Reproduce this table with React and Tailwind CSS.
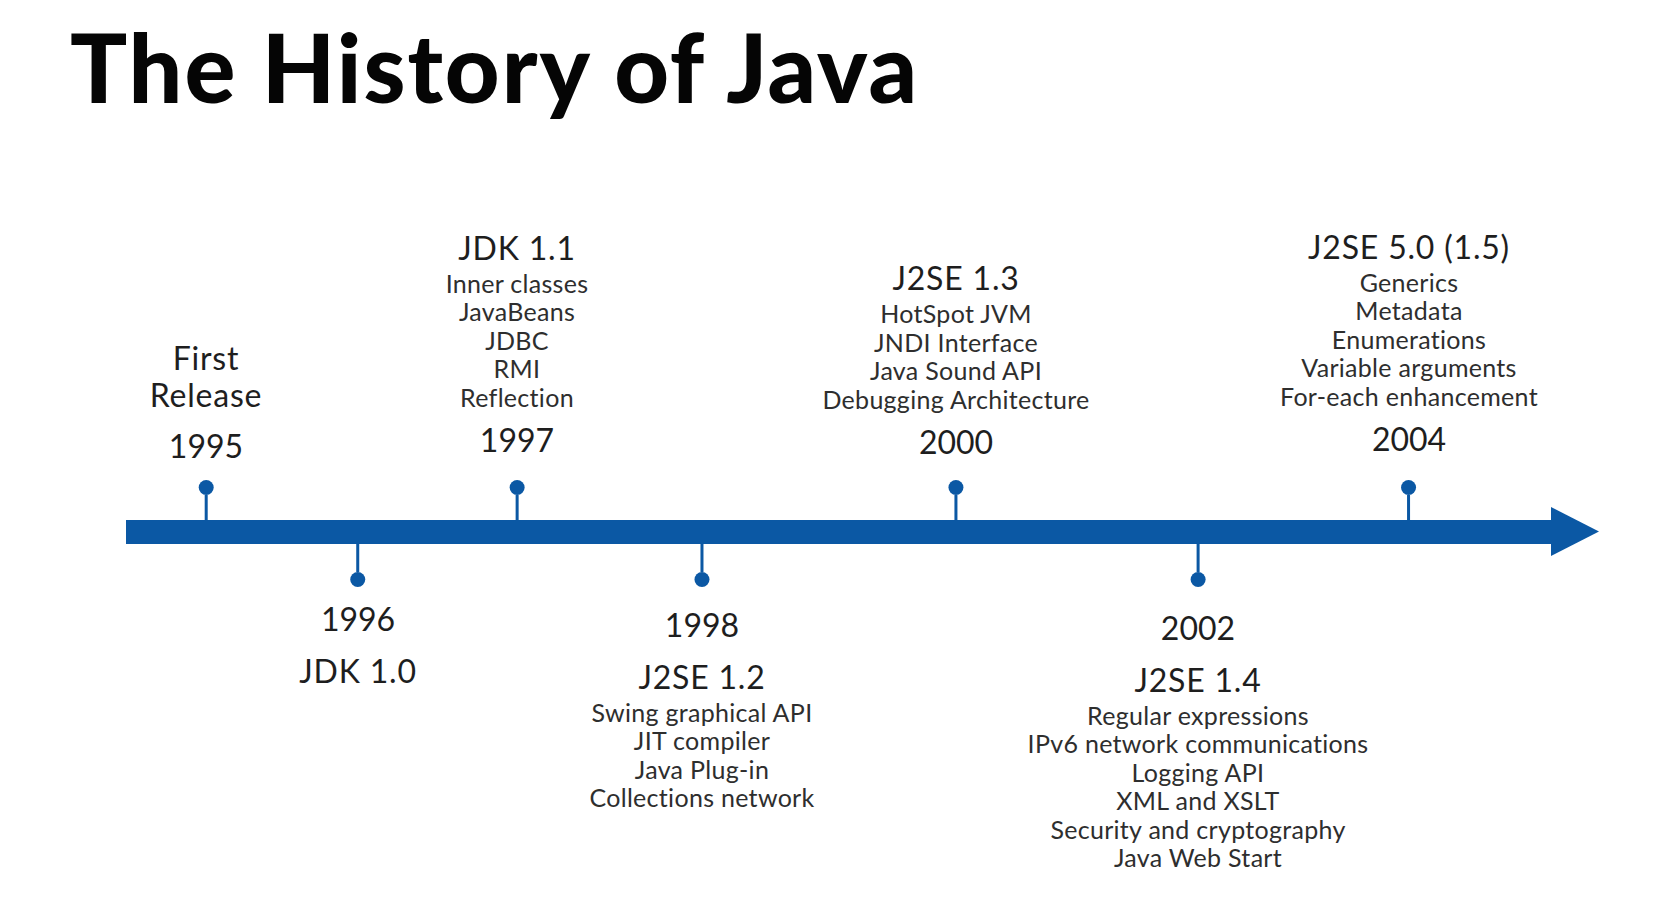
const BLUE = "bg-[#0b58a4]";

const topEvents = [
  {
    pos: "left-[206px]",
    year: "1995",
    yearCls: "mt-[15px] mb-[16px]",
    name: ["First", "Release"],
    items: [],
  },
  {
    pos: "left-[517px]",
    year: "1997",
    yearCls: "mt-[11px] mb-[22px]",
    name: ["JDK 1.1"],
    items: ["Inner classes", "JavaBeans", "JDBC", "RMI", "Reflection"],
  },
  {
    pos: "left-[956px]",
    year: "2000",
    yearCls: "mt-[11px] mb-[20px]",
    name: ["J2SE 1.3"],
    items: ["HotSpot JVM", "JNDI Interface", "Java Sound API", "Debugging Architecture"],
  },
  {
    pos: "left-[1409px]",
    year: "2004",
    yearCls: "mt-[11px] mb-[23px]",
    name: ["J2SE 5.0 (1.5)"],
    items: ["Generics", "Metadata", "Enumerations", "Variable arguments", "For-each enhancement"],
  },
];

const bottomEvents = [
  {
    pos: "left-[358px]",
    year: "1996",
    yearCls: "mt-[14px]",
    name: "JDK 1.0",
    items: [],
  },
  {
    pos: "left-[702px]",
    year: "1998",
    yearCls: "mt-[20px]",
    name: "J2SE 1.2",
    items: ["Swing graphical API", "JIT compiler", "Java Plug-in", "Collections network"],
  },
  {
    pos: "left-[1198px]",
    year: "2002",
    yearCls: "mt-[23px]",
    name: "J2SE 1.4",
    items: [
      "Regular expressions",
      "IPv6 network communications",
      "Logging API",
      "XML and XSLT",
      "Security and cryptography",
      "Java Web Start",
    ],
  },
];

function Items({ items }) {
  if (!items.length) return null;
  return (
    <div className="mt-[3px] flex flex-col items-center text-[25px] leading-[28.4px] tracking-[0.3px] text-[#2e2e2e]">
      {items.map((t) => (
        <span key={t} className="whitespace-nowrap">{t}</span>
      ))}
    </div>
  );
}

function TopEvent({ ev }) {
  return (
    <div className={`absolute bottom-[382px] ${ev.pos} -translate-x-1/2 flex flex-col items-center text-[#1e1e1e]`}>
      <div className="flex flex-col items-center text-[32px] leading-[37px] tracking-[0.8px]">
        {ev.name.map((n) => (
          <span key={n} className="whitespace-nowrap">{n}</span>
        ))}
      </div>
      <Items items={ev.items} />
      <div className={`text-[32px] leading-[36px] ${ev.yearCls}`}>{ev.year}</div>
      <div className={`h-[15px] w-[15px] rounded-full ${BLUE}`} />
      <div className={`h-[26px] w-[3px] ${BLUE}`} />
    </div>
  );
}

function BottomEvent({ ev }) {
  return (
    <div className={`absolute top-[543px] ${ev.pos} -translate-x-1/2 flex flex-col items-center text-[#1e1e1e]`}>
      <div className={`h-[29px] w-[3px] ${BLUE}`} />
      <div className={`h-[15px] w-[15px] rounded-full ${BLUE}`} />
      <div className={`text-[32px] leading-[36px] ${ev.yearCls}`}>{ev.year}</div>
      <div className="mt-[16px] whitespace-nowrap text-[32px] leading-[36px] tracking-[0.8px]">{ev.name}</div>
      <Items items={ev.items} />
    </div>
  );
}

function Arrow() {
  return (
    <svg className="absolute left-[126px] top-[507px]" width="1473" height="49" viewBox="0 0 1473 49">
      <rect x="0" y="13" width="1426" height="24" fill="#0b58a4" />
      <polygon points="1425,0 1473,24.5 1425,49" fill="#0b58a4" />
    </svg>
  );
}

export default function App() {
  return (
    <div className="relative h-[903px] w-full overflow-hidden bg-white font-[Lato,'Liberation_Sans',sans-serif]">
      <h1 className="pl-[70px] pt-[19px] text-[95px] font-black leading-none tracking-[2px] text-[#050505]">
        The History of Java
      </h1>

      <Arrow />
      {topEvents.map((ev) => (
        <TopEvent key={ev.year} ev={ev} />
      ))}
      {bottomEvents.map((ev) => (
        <BottomEvent key={ev.year} ev={ev} />
      ))}
    </div>
  );
}
